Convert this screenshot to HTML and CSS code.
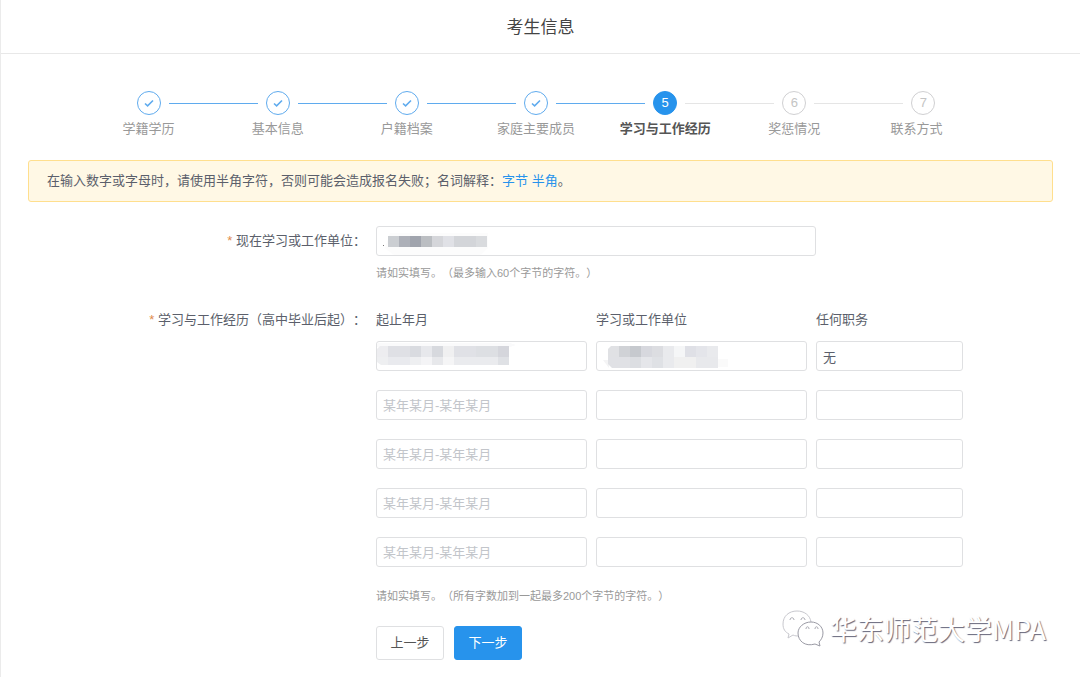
FILE: index.html
```html
<!DOCTYPE html>
<html lang="zh-CN">
<head>
<meta charset="utf-8">
<meta name="viewport" content="width=device-width, initial-scale=1">
<title>考生信息</title>
<link rel="stylesheet" href="styles.css">
</head>
<body>
<div class="page">
  <header class="header"><h1 class="title">考生信息</h1></header>
  <main class="main">
    <ol class="steps">
      <li class="step done"><span class="dot"><svg class="tick" viewBox="0 0 12 12"><path d="M2 6.5l2.600 2.400L10 3.500"/></svg></span><span class="step-label">学籍学历</span></li>
      <li class="step done"><span class="dot"><svg class="tick" viewBox="0 0 12 12"><path d="M2 6.5l2.600 2.400L10 3.500"/></svg></span><span class="step-label">基本信息</span></li>
      <li class="step done"><span class="dot"><svg class="tick" viewBox="0 0 12 12"><path d="M2 6.5l2.600 2.400L10 3.500"/></svg></span><span class="step-label">户籍档案</span></li>
      <li class="step done"><span class="dot"><svg class="tick" viewBox="0 0 12 12"><path d="M2 6.5l2.600 2.400L10 3.500"/></svg></span><span class="step-label">家庭主要成员</span></li>
      <li class="step current" aria-current="step"><span class="dot">5</span><span class="step-label">学习与工作经历</span></li>
      <li class="step"><span class="dot">6</span><span class="step-label">奖惩情况</span></li>
      <li class="step"><span class="dot">7</span><span class="step-label">联系方式</span></li>
    </ol>

    <p class="notice">在输入数字或字母时，请使用半角字符，否则可能会造成报名失败；名词解释：<a class="link" href="#byte">字节</a> <a class="link" href="#half">半角</a>。</p>

    <form class="form">
      <label class="label" for="unit"><span class="star">*</span> 现在学习或工作单位：</label>
      <div class="field">
        <div class="control wide">
          <input class="input" id="unit" type="text">
          <svg class="mask" width="120" height="30" viewBox="0 0 120 30">
            <path fill="#fcfcfc" d="M14 7h98v15l-8 7H18l-9-7z"/>
            <path fill="#777" d="M7 19h1v1H7z"/>
            <g transform="translate(12 10)">
              <path fill="#cbced2" d="M0 0h11v11H0z"/><path fill="#adb0b8" d="M11 0h11v11H11z"/><path fill="#a0a4ad" d="M22 0h11v11H22z"/><path fill="#bbbec2" d="M33 0h11v11H33z"/><path fill="#d5d6da" d="M44 0h11v11H44z"/><path fill="#e0e1e6" d="M55 0h11v11H55z"/><path fill="#d3d5d9" d="M66 0h22v11H66z"/><path fill="#d9dbde" d="M88 0h11v11H88z"/>
            </g>
          </svg>
        </div>
        <p class="hint">请如实填写。（最多输入60个字节的字符。）</p>
      </div>

      <span class="label" id="history"><span class="star">*</span> 学习与工作经历（高中毕业后起）：</span>
      <div class="field" role="group" aria-labelledby="history">
        <div class="grid heads"><span id="c1">起止年月</span><span id="c2">学习或工作单位</span><span id="c3">任何职务</span></div>
        <div class="grid">
          <div class="control">
            <input class="input" type="text" aria-labelledby="c1">
            <svg class="mask" width="140" height="30" viewBox="0 0 140 30">
              <g transform="translate(1 5)">
                <path fill="#fafafb" d="M0-3h133l6 2-6 2H0z"/>
                <path fill="#ededf0" d="M3 0h8v11H0V3z"/><path fill="#dfe0e5" d="M11 0h22v11H11z"/><path fill="#d9dbe0" d="M33 0h11v11H33z"/><path fill="#e7e8ec" d="M44 0h11v11H44z"/><path fill="#d7d9de" d="M55 0h11v11H55z"/><path fill="#f0f0f1" d="M66 0h11v11H66z"/><path fill="#e0e1e6" d="M77 0h22v11H77z"/><path fill="#dddfe3" d="M99 0h22v11H99z"/><path fill="#d5d6dc" d="M121 0h11v11h-11z"/>
                <path fill="#eeeff1" d="M0 11h11v8H4l-4-3z"/><path fill="#e9eaee" d="M11 11h22v8H11z"/><path fill="#eeeff1" d="M33 11h11v8H33z"/><path fill="#f4f4f6" d="M44 11h11v8H44z"/><path fill="#e7e8eb" d="M55 11h11v8H55z"/><path fill="#f5f5f6" d="M66 11h11v8H66z"/><path fill="#eaebee" d="M77 11h44v8H77z"/><path fill="#dfe1e5" d="M121 11h11v8h-11z"/>
              </g>
            </svg>
          </div>
          <div class="control">
            <input class="input" type="text" aria-labelledby="c2">
            <svg class="mask" width="140" height="30" viewBox="0 0 140 30">
              <path fill="#f4f4f5" d="M7 19h6v8z"/><path fill="#fafafa" d="M122 18h10v8h-10z"/>
              <g transform="translate(12 5)">
                <path fill="#e0e1e4" d="M3 0h8v11H0V3z"/><path fill="#d0d2d6" d="M11 0h11v11H11z"/><path fill="#c6c9ce" d="M22 0h11v11H22z"/><path fill="#d7d8de" d="M33 0h11v11H33z"/><path fill="#dcdde1" d="M44 0h11v11H44z"/><path fill="#e9eaed" d="M55 0h11v11H55z"/><path fill="#f5f6f7" d="M66 0h11v11H66z"/><path fill="#dfe0e6" d="M77 0h11v11H77z"/><path fill="#e4e5ea" d="M88 0h11v11H88z"/><path fill="#e9eaed" d="M99 0h11v11H99z"/>
                <path fill="#e0e1e5" d="M0 11h22v11H4l-4-4z"/><path fill="#dcdee2" d="M22 11h11v11H22z"/><path fill="#e5e6ea" d="M33 11h11v11H33z"/><path fill="#dfe1e5" d="M44 11h11v11H44z"/><path fill="#e9eaed" d="M55 11h11v11H55z"/><path fill="#f0f0f0" d="M66 11h22v11H66z"/><path fill="#e8e9ec" d="M88 11h22v11H88z"/>
              </g>
            </svg>
          </div>
          <input class="input" type="text" value="无" aria-labelledby="c3">
        </div>
        <div class="grid"><input class="input" type="text" placeholder="某年某月-某年某月" aria-labelledby="c1"><input class="input" type="text" aria-labelledby="c2"><input class="input" type="text" aria-labelledby="c3"></div>
        <div class="grid"><input class="input" type="text" placeholder="某年某月-某年某月" aria-labelledby="c1"><input class="input" type="text" aria-labelledby="c2"><input class="input" type="text" aria-labelledby="c3"></div>
        <div class="grid"><input class="input" type="text" placeholder="某年某月-某年某月" aria-labelledby="c1"><input class="input" type="text" aria-labelledby="c2"><input class="input" type="text" aria-labelledby="c3"></div>
        <div class="grid"><input class="input" type="text" placeholder="某年某月-某年某月" aria-labelledby="c1"><input class="input" type="text" aria-labelledby="c2"><input class="input" type="text" aria-labelledby="c3"></div>
        <p class="hint">请如实填写。（所有字数加到一起最多200个字节的字符。）</p>
        <div class="actions"><button class="btn" type="button">上一步</button><button class="btn primary" type="button">下一步</button></div>
      </div>
    </form>
  </main>

  <div class="watermark">
    <svg class="wechat" width="44" height="38" viewBox="0 0 44 38">
      <g fill="#fff" stroke-linejoin="round">
        <path class="bubble" d="M29 12C28 5 22 1 15 1 7 1 1 6 1 14c0 5 2 8 6 10l-1 4 5-3c2 1 4 1 6 1"/>
        <path class="bubble front" d="M29 12c7 0 12 5 12 11 0 4-2 7-4 9l1 4-5-2c-10 3-17-3-17-11 0-6 6-11 13-11z"/>
        <path class="eye" d="M8 10c0-3 4-3 4 0M19 10c0-3 4-3 4 0M24 19c0-3 3-3 3 0M33 19c0-3 3-3 3 0"/>
      </g>
    </svg>
    <span>华东师范大学MPA</span>
  </div>
</div>
</body>
</html>
```
FILE: styles.css
```css
* { box-sizing: border-box; }

body {
  margin: 0;
  background: #fff;
  color: #5b5f6b;
  font: 13px/20px "Liberation Sans", "Noto Sans CJK SC", sans-serif;
  text-spacing-trim: space-all;
}

.page {
  position: relative;
  min-height: 100vh;
  border-left: 1px solid #ebebeb;
}

.header {
  padding: 16px 0 13px;
  border-bottom: 1px solid #e8e8e8;
  text-align: center;
}

.title {
  margin: 0;
  color: #444;
  font-size: 17px;
  font-weight: 400;
  line-height: 24px;
}

.main { padding: 37px 27px 16px; }

.steps {
  display: grid;
  grid-template-columns: repeat(7, 1fr);
  margin: 0 65px 0 56px;
  padding: 0;
  list-style: none;
}

.step {
  position: relative;
  display: flex;
  flex-direction: column;
  align-items: center;
  gap: 4px;
  color: #999;
}

.step:not(:last-child)::after {
  content: "";
  position: absolute;
  top: 12px;
  left: calc(50% + 20px);
  width: calc(100% - 40px);
  height: 1px;
  background: #e5e5e5;
}

.step.done::after { background: #5fabee; }

.dot {
  display: flex;
  align-items: center;
  justify-content: center;
  width: 24px;
  height: 24px;
  border: 1px solid #d0d0d2;
  border-radius: 50%;
  color: #c4c4c4;
}

.done .dot { border-color: #5fabee; }

.current .dot {
  border-color: #2793ec;
  background: #2793ec;
  color: #fff;
}

.tick {
  width: 12px;
  height: 12px;
  fill: none;
  stroke: #5fabee;
  stroke-width: 1.600;
}

.step-label { white-space: nowrap; }
.step:last-child .step-label { padding-right: 14px; }

.current .step-label {
  color: #555;
  font-weight: 700;
}

.notice {
  margin: 21px 0 24px;
  padding: 10px 18px;
  border: 1px solid #ffdf8e;
  border-radius: 3px;
  background: #fff8e5;
}

.link {
  color: #2793ec;
  text-decoration: none;
}

.form {
  display: grid;
  grid-template-columns: 338px minmax(0, 587px);
  column-gap: 10px;
  row-gap: 28px;
}

.label {
  padding-top: 5px;
  text-align: right;
}

.field + .label { padding-top: 0; }
.star { color: #e08a4c; }

.control { position: relative; }
.control.wide { width: 75%; }

.mask {
  position: absolute;
  top: 0;
  left: 0;
  pointer-events: none;
}

.input {
  display: block;
  width: 100%;
  height: 30px;
  padding: 0 6px;
  border: 1px solid #dfe0e2;
  border-radius: 3px;
  background: #fff;
  color: #5b5f6b;
  font: inherit;
}

.input::placeholder { color: #c2c5ca; opacity: 1; }

.hint {
  margin: 8px 0 0;
  color: #999;
  font-size: 11px;
  line-height: 18px;
}

.grid {
  display: grid;
  grid-template-columns: 211fr 211fr 147fr;
  column-gap: 9px;
}

.grid + .grid { margin-top: 19px; }
.grid.heads + .grid { margin-top: 11px; }
.grid + .hint { margin-top: 20px; }

.actions {
  display: flex;
  gap: 10px;
  margin-top: 21px;
}

.btn {
  width: 68px;
  height: 34px;
  padding: 0;
  border: 1px solid #dfe0e2;
  border-radius: 3px;
  background: #fff;
  color: #555;
  font: inherit;
}

.btn.primary {
  border-color: #2793ec;
  background: #2793ec;
  color: #fff;
}

.watermark {
  position: absolute;
  right: 34px;
  bottom: 29px;
  display: flex;
  align-items: center;
  gap: 4px;
  color: #fff;
  font: 27px/38px "Noto Sans CJK SC", sans-serif;
  text-shadow: 1px 1px 1px #66667a;
}

.bubble { stroke: #c8c8ce; stroke-width: 1; }
.bubble.front { stroke: #9a9aa4; }
.eye { fill: none; stroke: #aaaab2; stroke-width: 1; }
```
